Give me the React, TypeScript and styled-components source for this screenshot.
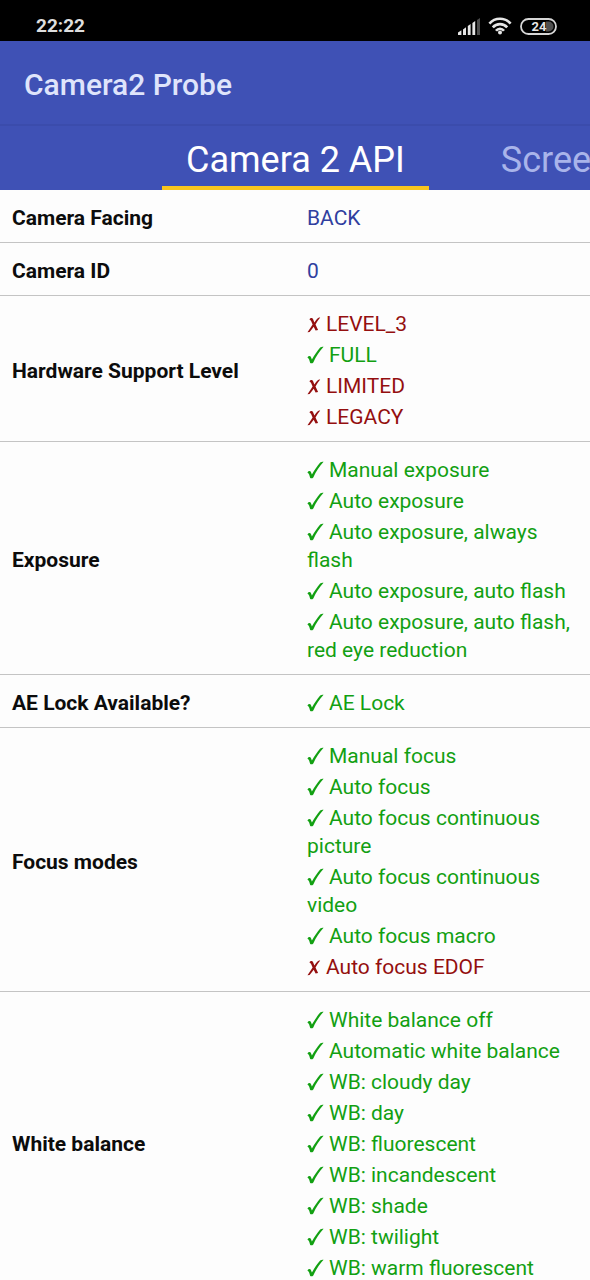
import React from "react";
import styled, { createGlobalStyle } from "styled-components";

const GlobalStyle = createGlobalStyle`
  * { box-sizing: border-box; }
  body { margin: 0; background: #fdfdfd; font-family: Roboto, "Liberation Sans", sans-serif; }
`;

const Screen = styled.div`
  display: flex;
  flex-direction: column;
  height: 100vh;
  overflow: hidden;
`;

const StatusBar = styled.div`
  display: flex;
  align-items: center;
  justify-content: space-between;
  flex: none;
  height: 41px;
  padding: 11px 33px 0 36px;
  background: #000;
  color: #dedede;
`;

const Clock = styled.time`
  font-size: 19px;
  line-height: 28px;
  font-weight: 700;
`;

const StatusIcons = styled.div`
  display: flex;
  align-items: center;
  gap: 8px;
`;

const AppBar = styled.header`
  flex: none;
  display: flex;
  align-items: center;
  height: 85px;
  padding: 4px 24px 0;
  background: #3f51b5;
  border-bottom: 2px solid #3b4cac;
`;

const Title = styled.h1`
  margin: 0;
  color: #dfe4fb;
  font-size: 30px;
  line-height: 36px;
  font-weight: 500;
`;

const Tabs = styled.nav`
  flex: none;
  display: flex;
  gap: 48px;
  height: 64px;
  padding-left: 162px;
  background: #3f51b5;
  overflow: hidden;
`;

const Tab = styled.button<{ $active?: boolean }>`
  flex: none;
  padding: 8px 24px 0;
  border: 0;
  border-bottom: 4px solid ${(p) => (p.$active ? "#f9c51d" : "transparent")};
  background: none;
  color: ${(p) => (p.$active ? "#fff" : "#a9b4ea")};
  font-family: inherit;
  font-size: 36px;
  line-height: 52px;
  white-space: nowrap;
`;

const Content = styled.main`
  flex: 1;
  min-height: 0;
  overflow-y: auto;
  scrollbar-width: none;
`;

const Table = styled.table`
  width: 100%;
  table-layout: fixed;
  border-collapse: separate;
  border-spacing: 0;
  font-size: 21px;
  line-height: 28px;
`;

const Label = styled.th`
  padding: 14px 12px 10px;
  border-bottom: 1px solid #c4c4c4;
  color: #0c0c0c;
  font-weight: 700;
  text-align: left;
  vertical-align: middle;
`;

const Value = styled.td`
  padding: 11px 12px 10px;
  border-bottom: 1px solid #c4c4c4;
  color: #303f9f;
`;

const Entry = styled.div<{ $tone?: "yes" | "no" }>`
  padding-top: 3px;
  color: ${(p) => (p.$tone === "yes" ? "#12a012" : p.$tone === "no" ? "#940f0f" : "inherit")};
`;

const Mark = styled.svg`
  margin-right: 5px;
  vertical-align: -2px;
  fill: currentColor;
`;

const Check = () => (
  <Mark width="17" height="18" viewBox="0 0 17 18" role="img" aria-label="Supported">
    <path d="M0.4 11.4 C1.6 9.6 3.5 9.7 4 11.2 L4.9 13.6 C7.4 9.2 10.2 5 13.2 1.6 C13.8 0.9 15 0.7 16.6 0.7 C12.5 5 9 10.4 6.3 16.4 C5.6 17.4 4.2 17.5 3.2 17.1 C2.6 14.8 2.2 12.2 0.4 11.4 Z" />
  </Mark>
);

const Cross = () => (
  <Mark width="14" height="17" viewBox="0 0 14 17" role="img" aria-label="Not supported">
    <path d="M2.4 3.4 C3.4 1.8 5.4 1.6 6 3 L7.4 6.4 C8.8 4.4 10 2.9 11.1 2.1 C11.7 1.7 12.5 1.6 13.2 1.6 C11.5 3.8 9.9 6 8.5 8.4 L11.1 14 L8.6 14.6 L6.7 10.8 C5.3 12.7 3.9 14.6 2.6 16 L0.5 16.2 C2.3 13.6 4.1 11 5.6 8.6 L4.2 5.2 C3.8 4.2 3.2 3.7 2.4 3.4 Z" />
  </Mark>
);

type Item = { text: string; ok?: boolean };

const yes = (text: string): Item => ({ text, ok: true });
const no = (text: string): Item => ({ text, ok: false });

const rows: { label: string; items: Item[] }[] = [
  { label: "Camera Facing", items: [{ text: "BACK" }] },
  { label: "Camera ID", items: [{ text: "0" }] },
  { label: "Hardware Support Level", items: [no("LEVEL_3"), yes("FULL"), no("LIMITED"), no("LEGACY")] },
  {
    label: "Exposure",
    items: [
      yes("Manual exposure"),
      yes("Auto exposure"),
      yes("Auto exposure, always flash"),
      yes("Auto exposure, auto flash"),
      yes("Auto exposure, auto flash, red eye reduction"),
    ],
  },
  { label: "AE Lock Available?", items: [yes("AE Lock")] },
  {
    label: "Focus modes",
    items: [
      yes("Manual focus"),
      yes("Auto focus"),
      yes("Auto focus continuous picture"),
      yes("Auto focus continuous video"),
      yes("Auto focus macro"),
      no("Auto focus EDOF"),
    ],
  },
  {
    label: "White balance",
    items: [
      yes("White balance off"),
      yes("Automatic white balance"),
      yes("WB: cloudy day"),
      yes("WB: day"),
      yes("WB: fluorescent"),
      yes("WB: incandescent"),
      yes("WB: shade"),
      yes("WB: twilight"),
      yes("WB: warm fluorescent"),
    ],
  },
];

const SignalIcon = () => (
  <svg width="22" height="17" viewBox="0 0 22 17" fill="#e6e6e6" aria-label="Signal" role="img">
    <path d="M0 14.5 L3.4 12.2 V17 H0z M5 11.4 L8 9.2 V17 H5z M9.8 8 L12.6 6 V17 H9.8z M14.4 5 L17.2 3 V17 H14.4z" />
    <path d="M19 2 L22 0 V17 H19z" fill="#4c4c4c" />
  </svg>
);

const WifiIcon = () => (
  <svg width="24" height="18" viewBox="0 0 24 18" fill="none" stroke="#e6e6e6" strokeWidth="2.6" aria-label="Wi-Fi" role="img">
    <path d="M1.4 6.6 C7 0.2 17 0.2 22.6 6.6" />
    <path d="M4.8 10.4 C8.6 6 15.4 6 19.2 10.4" />
    <path d="M8 13.8 C10.2 11 13.8 11 16 13.8" />
    <circle cx="12" cy="15.6" r="2" fill="#e6e6e6" stroke="none" />
  </svg>
);

const BatteryIcon = () => (
  <svg width="37" height="17" viewBox="0 0 37 17" aria-label="Battery 24%" role="img">
    <path d="M26 3.5 H28.5 A5 5 0 0 1 28.5 13.5 H26 Z" fill="#505050" />
    <rect x="1" y="1" width="35" height="15" rx="7.5" fill="none" stroke="#d6d6d6" strokeWidth="1.8" />
    <text x="19" y="13" textAnchor="middle" fill="#e6e6e6" fontSize="13" fontWeight="700" fontFamily="Roboto, sans-serif">24</text>
  </svg>
);

export default function App() {
  return (
    <Screen>
      <GlobalStyle />
      <StatusBar>
        <Clock>22:22</Clock>
        <StatusIcons>
          <SignalIcon />
          <WifiIcon />
          <BatteryIcon />
        </StatusIcons>
      </StatusBar>
      <AppBar>
        <Title>Camera2 Probe</Title>
      </AppBar>
      <Tabs>
        <Tab type="button" $active>Camera 2 API</Tab>
        <Tab type="button">Screen</Tab>
      </Tabs>
      <Content>
        <Table>
          <tbody>
            {rows.map((row) => (
              <tr key={row.label}>
                <Label scope="row">{row.label}</Label>
                <Value>
                  {row.items.map(({ text, ok }) => (
                    <Entry key={text} $tone={ok === undefined ? undefined : ok ? "yes" : "no"}>
                      {ok === true && <Check />}
                      {ok === false && <Cross />}
                      {text}
                    </Entry>
                  ))}
                </Value>
              </tr>
            ))}
          </tbody>
        </Table>
      </Content>
    </Screen>
  );
}
